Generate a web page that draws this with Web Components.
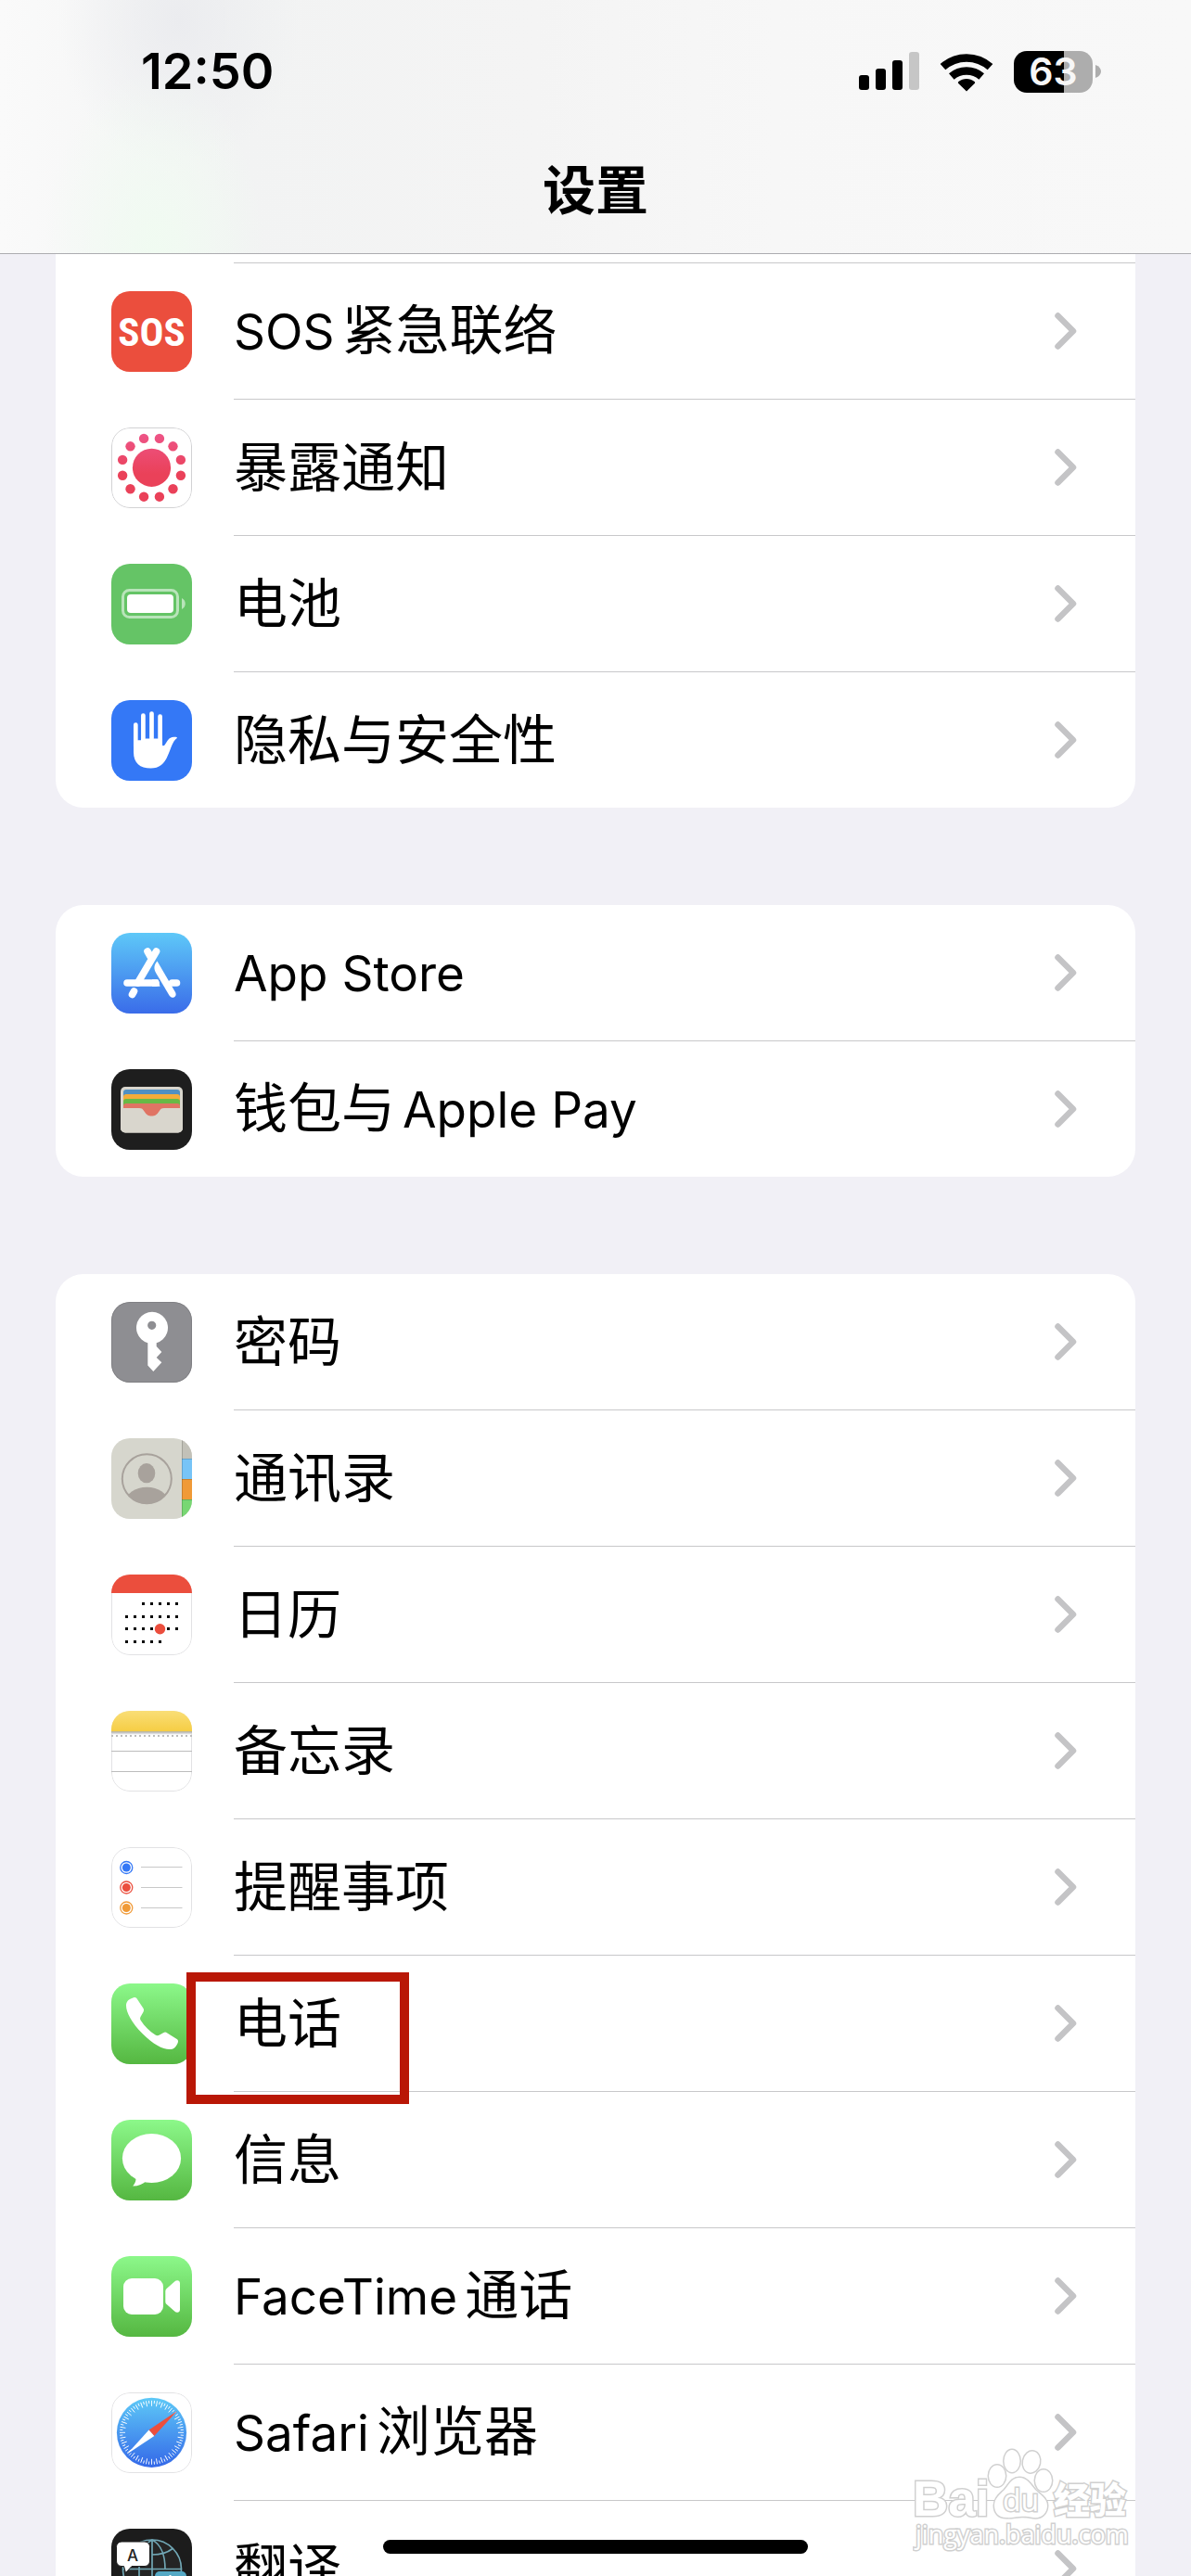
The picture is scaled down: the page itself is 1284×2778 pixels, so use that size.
<!DOCTYPE html>
<html lang="zh-CN">
<head>
<meta charset="utf-8">
<meta name="viewport" content="width=device-width">
<title>设置</title>
<style>
  html, body { margin: 0; height: 100%; }
  body { background: #f1f0f6; color: #000; font-family: Inter, "Noto Sans CJK SC", sans-serif; text-autospace: no-autospace; overflow: hidden; }
</style>
</head>
<body>
<settings-screen>
  <status-bar slot="top" time="12:50" level="63"></status-bar>
  <nav-title slot="top">设置</nav-title>

  <settings-group continued>
    <settings-row icon="sos"><latin-text>SOS</latin-text>紧急联络</settings-row>
    <settings-row icon="exposure">暴露通知</settings-row>
    <settings-row icon="battery">电池</settings-row>
    <settings-row icon="privacy">隐私与安全性</settings-row>
  </settings-group>

  <settings-group>
    <settings-row icon="appstore"><latin-text>App Store</latin-text></settings-row>
    <settings-row icon="wallet">钱包与<latin-text after>Apple Pay</latin-text></settings-row>
  </settings-group>

  <settings-group>
    <settings-row icon="key">密码</settings-row>
    <settings-row icon="contacts">通讯录</settings-row>
    <settings-row icon="calendar">日历</settings-row>
    <settings-row icon="notes">备忘录</settings-row>
    <settings-row icon="reminders">提醒事项</settings-row>
    <settings-row icon="phone" marked>电话</settings-row>
    <settings-row icon="messages">信息</settings-row>
    <settings-row icon="facetime"><latin-text>FaceTime</latin-text>通话</settings-row>
    <settings-row icon="safari"><latin-text>Safari</latin-text>浏览器</settings-row>
    <settings-row icon="translate">翻译</settings-row>
  </settings-group>

  <site-watermark slot="overlay"></site-watermark>
  <home-indicator slot="overlay"></home-indicator>
</settings-screen>

<script>
const define = (name, render) => customElements.define(name, class extends HTMLElement {
  connectedCallback() {
    if (this.shadowRoot) return;
    this.attachShadow({ mode: 'open' }).innerHTML = render(this).trim();
  }
});

const range = n => Array.from({ length: n }, (_, i) => i);
const grad = (id, a, b) => `<defs><linearGradient id="${id}" x1="0" y1="0" x2="0" y2="1"><stop offset="0" stop-color="${a}"/><stop offset="1" stop-color="${b}"/></linearGradient></defs>`;
const fill = c => `<rect width="87" height="87" fill="${c}"/>`;
const edge = c => `<rect x=".5" y=".5" width="86" height="86" rx="19.5" fill="none" stroke="${c}"/>`;
const green = grad('g', '#8cf88a', '#55b741') + fill('url(#g)');

const icons = {
  sos: fill('#eb4e3d') + `<text x="43.500" y="59" text-anchor="middle" fill="#fff" font-family="'Liberation Sans Narrow','Roboto Condensed',Roboto,sans-serif" font-weight="700" font-size="43">SOS</text>`,

  exposure: fill('#fff') + `<defs><linearGradient id="g" gradientUnits="userSpaceOnUse" x1="0" y1="6" x2="0" y2="50"><stop offset="0" stop-color="#ee5588"/><stop offset="1" stop-color="#ea4159"/></linearGradient></defs>
    <g fill="url(#g)"><circle cx="43.500" cy="43.300" r="20.600"/>${range(12).map(i => {
      const a = (15 + i * 30) * Math.PI / 180;
      return `<circle cx="${(43.5 + 32.5 * Math.cos(a)).toFixed(2)}" cy="${(43.3 + 32.5 * Math.sin(a)).toFixed(2)}" r="5.200"/>`;
    }).join('')}</g>` + edge('#d2d2d4'),

  battery: fill('#65c466') + `<rect x="12.500" y="28.500" width="59" height="29" rx="7" fill="none" stroke="#fff" stroke-opacity=".55" stroke-width="3"/>
    <rect x="17" y="33" width="50" height="20" rx="4" fill="#fff"/><path d="M76 37c5 2.500 5 9.500 0 12z" fill="#fff" fill-opacity=".55"/>`,

  privacy: fill('#3478f6') + `<g stroke="#fff" stroke-linecap="round" fill="none"><path d="M26.300 26.500V50M34.400 16.500V50M43.500 14.500V50M52.600 17.500V50" stroke-width="4.700"/></g>
    <path fill="#fff" d="M24 43.500c1.500.8 3 .8 4.500-.3h3.700v-1.700c1 1.200 3.500 1.200 4.500 0h4.500c1 1.200 3.500 1.200 4.600 0h4.500c1.200 1 3.500 1.300 4.700 0V48c0 1.500 1.500 1.700 2.500.5 3-4 4-8.500 10-8.800 2.500-.2 4.200.5 3.300 1.200-5 3.500-6.300 11-9.800 18.500C57.500 68.500 51.500 73.500 42.500 73.500 31 73.500 24 68 24 56z"/>`,

  appstore: grad('g', '#5ec8f8', '#3a6ce9') + fill('url(#g)') + `<g fill="none" stroke="#fff" stroke-width="7.600" stroke-linecap="round">
    <path d="M39 20l4 7M48.500 20L28.500 54M24.500 63l-2 3.500M65.500 54H70.500"/><path d="M17 54H48" /></g>
    <path d="M49.500 30.500c-3.500 4-4 8-1.500 12.500L62.500 67.500c3.500 5 9 1 6.500-3.500z" fill="#fff"/><path d="M44 50.200h6.500l2 7.600H44z" fill="#fff"/>`,

  wallet: fill('#1e1e1e') + `<defs><clipPath id="c"><rect x="13" y="22" width="61" height="30" rx="3"/></clipPath></defs>
    <rect x="10" y="19" width="67" height="49.500" rx="5" fill="#d9d6cd"/>
    <g clip-path="url(#c)"><rect x="13" y="22" width="61" height="12" fill="#4f90c3"/><rect x="13" y="27" width="61" height="12" rx="3" fill="#f3ac3a"/>
    <rect x="13" y="32" width="61" height="12" rx="3" fill="#68b946"/><rect x="13" y="37" width="61" height="20" rx="3" fill="#e07464"/></g>
    <path d="M10 42h20c3 0 4 1 5.500 3.500 2.500 4 4.500 5 8 5s5.500-1 8-5C53 43 54 42 57 42h20v21.500a5 5 0 0 1-5 5H15a5 5 0 0 1-5-5z" fill="#d9d6cd"/>`,

  key: fill('#8e8e92') + `<path fill="#fff" fill-rule="evenodd" d="M39.300 44.200a17 17 0 1 1 9.400 0V48l5.600 6-5.600 6 5.600 5.300-9 9.700-6-6.500zM43.700 20.700a4.600 4.600 0 1 0 0 9.200 4.600 4.600 0 1 0 0-9.200z"/>` + edge('#808084'),

  contacts: fill('#d6d6cd') + `<defs><clipPath id="c"><circle cx="38.300" cy="43.700" r="27"/></clipPath></defs>
    <rect x="76" width="11" height="22" fill="#c2c1b8"/><rect x="76" y="22" width="11" height="22" fill="#77c4f7"/><rect x="76" y="44" width="11" height="22" fill="#f09a37"/><rect x="76" y="66" width="11" height="21" fill="#78d773"/>
    <path d="M76.500 0V87M76 22.500H87M76 44.500H87M76 66.500H87" stroke="#000" stroke-opacity=".16"/>
    <circle cx="38.300" cy="43.700" r="26.500" fill="none" stroke="#a8a29c" stroke-width="2"/><ellipse cx="38" cy="37.700" rx="9.300" ry="10.600" fill="#a8a29c"/>
    <ellipse cx="38.300" cy="69" rx="23" ry="16.300" fill="#a8a29c" clip-path="url(#c)"/>`,

  calendar: fill('#fff') + edge('#e2e2e4') + `<rect width="87" height="20" fill="#eb4e3d"/>` +
    [[2, 6, 31.5], [0, 6, 45.5], [0, 6, 58.5], [0, 4, 72.5]].map(([a, b, y]) =>
      range(7).filter(i => i >= a && i <= b).map(i => `<rect x="${15 + i * 9}" y="${y - 1.5}" width="3" height="3"/>`).join('')).join('') +
    `<circle cx="52.500" cy="58.700" r="5.700" fill="#eb4e3d"/>`,

  notes: fill('#fff') + edge('#e2e2e4') + grad('g', '#f9de77', '#f6cd43') + `<rect width="87" height="22.500" fill="url(#g)"/>
    <path d="M0 23H87" stroke="#a9a9a4" stroke-width="1.400"/><path d="M0 24.500H87" stroke="#dcdcdc" stroke-width="1.500"/>
    <path d="M0 27H87" stroke="#bdbdbd" stroke-width="2" stroke-dasharray="2 3"/><path d="M0 43.500H87M0 65.500H87" stroke="#bcbcbc"/>`,

  reminders: fill('#fff') + edge('#e2e2e4') + [['#3478f6', 22, 21.5], ['#eb4e3d', 43.5, 43.5], ['#f09a37', 65.5, 65.5]].map(([c, y, l]) =>
    `<circle cx="16.300" cy="${y}" r="6.500" fill="none" stroke="${c}" stroke-width="1.300"/><circle cx="16.300" cy="${y}" r="4.500" fill="${c}"/><path d="M32 ${l}H76.500" stroke="#c8c8c8"/>`).join(''),

  phone: green + `<path fill="#fff" d="M24 15.300c1.800-.6 3 .1 4 1.700l6.300 9.500c1 1.600.9 2.700.2 4.200L31.500 36c-.6 1.300-.6 2.500.2 3.800C36 46.500 41 51.500 47.500 55.500c1.500.9 2.600.9 4 .2L56 53.200c1.700-.9 2.800-.8 4.300.2l10 6.300c1.700 1.100 2.100 2.300 1.400 4.200C69.500 69 67 71 63 71 55 71 45 65.500 33.500 54 22 42.500 16 31 16 24c0-4.500 2.500-7 8-8.700z"/>`,

  messages: green + `<ellipse cx="43.500" cy="41.500" rx="31.600" ry="26.500" fill="#fff"/><path d="M25.500 60c2 3.500 1 7.500-2.300 11.500 6 0 11-2 14.500-5.500z" fill="#fff"/>`,

  facetime: green + `<rect x="13" y="24" width="43" height="39" rx="9" fill="#fff"/><path d="M58.300 38.500c0-1.500.4-2.400 1.400-3.400l8.500-7.500c2.500-2.200 5.800-1.500 5.800 2v28c0 3.500-3.300 4.200-5.800 2l-8.500-7.500c-1-1-1.400-1.900-1.400-3.400z" fill="#fff"/>`,

  safari: fill('#fff') + edge('#e2e2e4') + grad('g', '#5ec9f7', '#3468e8') + `<circle cx="43.500" cy="43.300" r="37.600" fill="url(#g)"/>
    <g stroke="#fff" stroke-width=".9">${range(72).map(i => `<path d="M43.500 8.800v${i % 2 ? 3.2 : 6}" transform="rotate(${i * 5} 43.500 43.300)"/>`).join('')}</g>
    <path d="M71 20L46.300 47 40.500 40.500z" fill="#eb4e3d"/><path d="M17 66.500L46.300 47 40.500 40.500z" fill="#fff"/>`,

  translate: fill('#1c1c1c') + `<g fill="none" stroke="#71a7b5" stroke-width="1.700"><circle cx="44" cy="43.500" r="31.500" fill="#242424"/><path d="M44 12v63M12.500 43.500h63M44 12c10 5 14 18 14 31.500M44 12c-10 5-14 18-14 31.500M44 28c9 0 17-2.500 22-6.500M30 43.500V75"/></g>
    <path d="M11 14h25a5.500 5.500 0 0 1 5.500 5.500v15.500a5.500 5.500 0 0 1-5.500 5.500H22l-6.500 7-2-7H11A5.500 5.500 0 0 1 5.500 35V19.500A5.500 5.500 0 0 1 11 14z" fill="#fff" stroke="#1c1c1c"/>
    <text x="23" y="34.500" text-anchor="middle" font-family="Inter,sans-serif" font-weight="500" font-size="17" fill="#222">A</text>
    <rect x="47" y="46" width="34" height="27" rx="5" fill="#55a9c5"/><path d="M63.500 50v5M55 55.500h17" stroke="#fff" stroke-width="2"/>`
};

define('app-icon', el => `
  <style>:host{display:block;flex:none;width:87px;height:87px;border-radius:20px;overflow:hidden}svg{display:block;width:100%;height:100%}</style>
  <svg viewBox="0 0 87 87" aria-hidden="true">${icons[el.getAttribute('name')]}</svg>`);

define('latin-text', () => `
  <style>:host{display:inline;font-size:53px;margin-right:8px}:host([after]){margin:0 0 0 8px}</style><slot></slot>`);

define('settings-row', el => `
  <style>
    :host{display:block;position:relative}
    a{display:flex;padding-left:60px;color:inherit;text-decoration:none}
    app-icon{margin:30px 45px 30px 0}
    :host(:last-child) app-icon{margin-bottom:29px}
    .body{flex:1;display:flex;align-items:center;justify-content:space-between;padding-right:63px;border-bottom:1px solid #c8c8ca}
    :host(:last-child) .body{border-bottom:0}
    .label{font-size:58px;line-height:84px;white-space:nowrap}
    svg{flex:none;width:24px;height:40px}
    .mark{position:absolute;left:141px;top:18px;width:220px;height:122px;border:10px solid #b91706;z-index:1}
  </style>
  <a href="#"><app-icon name="${el.getAttribute('icon')}"></app-icon>
    <span class="body"><span class="label"><slot></slot></span>
      <svg viewBox="0 0 24 40" aria-hidden="true"><path d="M3.500 3.500L20 20 3.500 36.500" fill="none" stroke="#c4c4c6" stroke-width="6.500" stroke-linecap="round" stroke-linejoin="round"/></svg>
    </span></a>${el.hasAttribute('marked') ? '<div class="mark"></div>' : ''}`);

define('settings-group', el => `
  <style>
    :host{display:block;background:#fff;border-radius:30px;flex:none}
    :host([continued]){border-radius:0 0 30px 30px}
    .tail{height:9px;margin-left:192px;border-bottom:1px solid #c8c8ca}
  </style>
  ${el.hasAttribute('continued') ? '<div class="tail"></div>' : ''}<slot></slot>`);

define('status-bar', el => `
  <style>
    :host{display:flex;align-items:center;justify-content:space-between;height:64px;padding:45px 97px 0 152px}
    time{font-size:54px;font-weight:600;line-height:64px}
    .icons{display:flex;align-items:center;gap:22px}
    svg{display:block}
    .battery{display:flex;align-items:center;gap:3px}
    .cell{width:85px;height:45px;border-radius:14px;background:linear-gradient(90deg,#000 ${el.getAttribute('level')}%,#adadad 0);color:#f7f7f7;font-size:41px;font-weight:600;line-height:45px;text-align:center}
  </style>
  <time>${el.getAttribute('time')}</time>
  <div class="icons">
    <svg width="65" height="42" viewBox="0 0 65 42"><rect y="25" width="11" height="16" rx="3"/><rect x="18" y="18" width="11" height="23" rx="3"/><rect x="36" y="9" width="11" height="32" rx="3"/><rect x="54" width="11" height="41" rx="3" fill="#c6c6c6"/></svg>
    <svg width="58" height="43" viewBox="0 0 58 43"><path d="M29 42.500L20.300 34c-.6-.6-.6-1.500.1-2 5-4 12.200-4 17.200 0 .7.500.7 1.400.1 2z"/><path d="M12.800 26.500C22 18.500 36 18.500 45.200 26.500M3.500 16.200C18 3.200 40 3.200 54.500 16.200" fill="none" stroke="#000" stroke-width="8.500"/></svg>
    <div class="battery"><div class="cell">${el.getAttribute('level')}</div><svg width="6" height="14" viewBox="0 0 6 14"><path d="M0 0c8 3 8 11 0 14z" fill="#adadad"/></svg></div>
  </div>`);

define('nav-title', () => `
  <style>:host{display:block}h1{margin:0;padding:55px 0 25px;font-size:57px;font-weight:700;line-height:84px;text-align:center}</style>
  <h1><slot></slot></h1>`);

define('home-indicator', () => `
  <style>:host{display:block;position:absolute;left:0;right:0;bottom:24px}div{width:458px;height:15px;border-radius:8px;background:#000;margin:auto}</style><div></div>`);

define('site-watermark', () => `
  <style>
    :host{display:block;position:absolute;right:60px;bottom:17px}
    svg{display:block}
    .o{fill:#fff;stroke:#d0d0d0;stroke-width:3px;paint-order:stroke}
  </style>
  <svg width="240" height="124" viewBox="0 0 240 124">
    <g class="o"><ellipse cx="91" cy="33" rx="9" ry="11.500"/><ellipse cx="107" cy="17" rx="8.500" ry="12"/><ellipse cx="128" cy="18" rx="9" ry="11.500" transform="rotate(12 128 18)"/><ellipse cx="141" cy="38" rx="9" ry="11.500"/>
    <path d="M115 35c8 0 12 7 17 13 5 5 13 9 13 17 0 9-7 14-15 13-6-1-9-1.500-15-1s-9 1.500-14 1c-9 0-13-6-13-13 0-8 6-12 11-17 5-6 8-13 16-13z"/></g>
    <text class="o" x="0" y="76" font-family="'Liberation Sans',sans-serif" font-weight="700" font-size="53">Bai</text>
    <text class="o" x="97" y="71" font-family="'Open Sans',sans-serif" font-size="32">du</text>
    <text class="o" x="152" y="73" font-family="'Noto Sans CJK SC',sans-serif" font-weight="900" font-size="39">经验</text>
    <text class="o" x="3" y="106" font-family="'Open Sans',sans-serif" font-size="27">jingyan.baidu.com</text>
  </svg>`);

define('settings-screen', () => `
  <style>
    :host{display:flex;flex-direction:column;height:100vh;position:relative;overflow:hidden}
    header{flex:none;border-bottom:1px solid #acacb0;
      background:
        radial-gradient(120px 200px at 13% 100%,#f0fbf1 0%,#f0fbf100 100%),
        radial-gradient(130px 160px at 15% 8%,#ebecef 0%,#ebecef00 100%),
        linear-gradient(90deg,#fafafa 0%,#f2f3f3 20%,#f4f4f4 45%,#f7f7f7 65%,#f8f8f8 100%)}
    main{flex:1;min-height:0;overflow:hidden;display:flex;flex-direction:column;gap:105px;padding:0 60px}
  </style>
  <header><slot name="top"></slot></header>
  <main><slot></slot></main>
  <slot name="overlay"></slot>`);
</script>
</body>
</html>
